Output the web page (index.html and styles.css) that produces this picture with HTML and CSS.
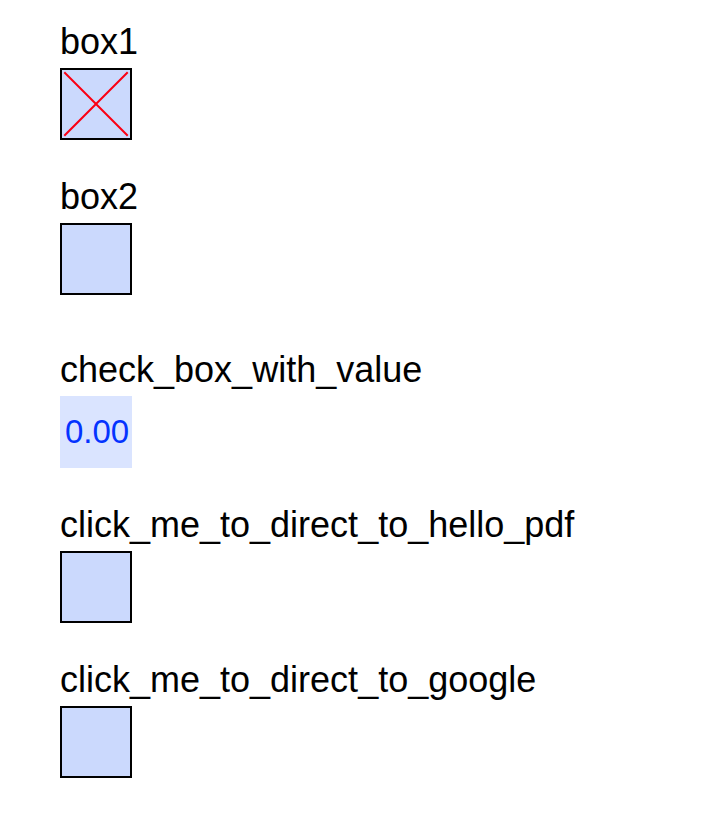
FILE: index.html
```html
<!DOCTYPE html>
<html lang="en">
<head>
<meta charset="utf-8">
<title>Form fields</title>
<link rel="stylesheet" href="styles.css">
</head>
<body>
<form class="form">
  <div class="field">
    <label class="label" for="box1">box1</label>
    <span class="check">
      <input class="box" type="checkbox" id="box1" checked>
      <svg class="cross" viewBox="0 0 72 72" aria-hidden="true">
        <path d="M5 5L67 67M5 67L67 5"/>
      </svg>
    </span>
  </div>
  <div class="field field-spaced">
    <label class="label" for="box2">box2</label>
    <input class="box" type="checkbox" id="box2">
  </div>
  <div class="field">
    <label class="label" for="value">check_box_with_value</label>
    <input class="value" type="text" id="value" value="0.00">
  </div>
  <div class="field">
    <label class="label" for="hello">click_me_to_direct_to_hello_pdf</label>
    <button class="box" type="button" id="hello"></button>
  </div>
  <div class="field">
    <label class="label" for="google">click_me_to_direct_to_google</label>
    <button class="box" type="button" id="google"></button>
  </div>
</form>
</body>
</html>
```
FILE: styles.css
```css
* {
  box-sizing: border-box;
}

body {
  margin: 0;
  background: #fff;
  color: #000;
  font-family: "Liberation Sans", Arial, sans-serif;
}

.form {
  display: flex;
  flex-direction: column;
  gap: 37px;
  padding: 22px 60px 40px;
}

.field {
  display: flex;
  flex-direction: column;
  align-items: flex-start;
  gap: 6px;
}

.field-spaced {
  margin-bottom: 18px;
}

.label {
  font-size: 36px;
  line-height: 40px;
}

.check {
  display: grid;
}

.box,
.cross {
  grid-area: 1 / 1;
  width: 72px;
  height: 72px;
}

.box {
  appearance: none;
  margin: 0;
  padding: 0;
  border: 2px solid #000;
  border-radius: 0;
  background: #cbd9fd;
}

.cross {
  display: none;
  fill: none;
  stroke: #fb0013;
  stroke-width: 2;
  stroke-linecap: square;
  pointer-events: none;
}

.box:checked + .cross {
  display: block;
}

.value {
  width: 72px;
  height: 72px;
  margin: 0;
  padding: 0 0 0 5px;
  border: 0;
  background: #dae4ff;
  color: #0433ff;
  font: 33px "Liberation Sans", Arial, sans-serif;
}
```
